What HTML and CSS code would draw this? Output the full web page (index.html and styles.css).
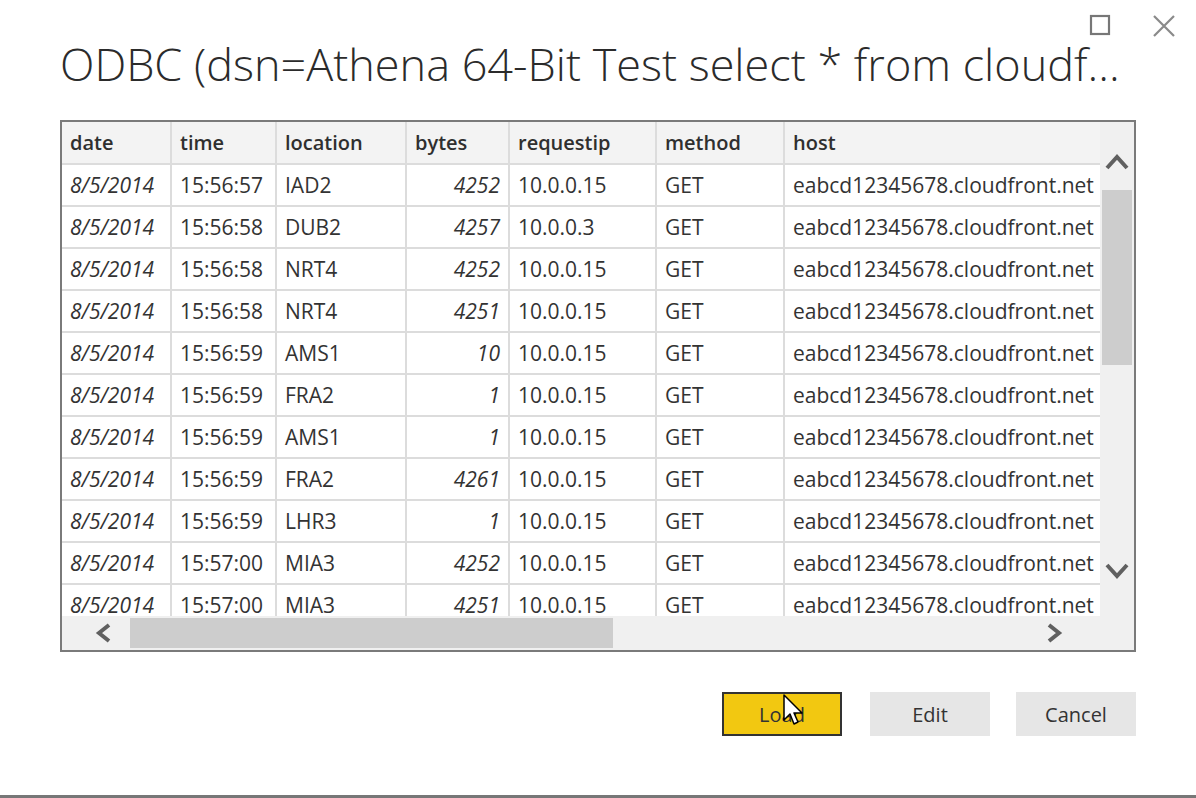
FILE: index.html
```html
<!DOCTYPE html>
<html lang="en">
<head>
<meta charset="utf-8">
<title>ODBC preview</title>
<link rel="stylesheet" href="styles.css">
</head>
<body>
<div class="dialog">
  <div class="titlebar">
    <svg class="win-icon" width="22" height="22" viewBox="0 0 22 22"><rect x="2" y="2" width="18" height="18" fill="none" stroke="#777" stroke-width="2.2"/></svg>
    <svg class="win-icon close" width="24" height="24" viewBox="0 0 24 24"><path d="M2 2 L22 22 M22 2 L2 22" stroke="#8a8a8a" stroke-width="2.2"/></svg>
  </div>
  <h1 class="title">ODBC (dsn=Athena 64-Bit Test select * from cloudf...</h1>
  <div class="frame">
    <div class="viewport">
      <div class="grid">
        <div class="hd">date</div><div class="hd">time</div><div class="hd">location</div><div class="hd">bytes</div><div class="hd">requestip</div><div class="hd">method</div><div class="hd">host</div>

        <div class="c i">8/5/2014</div><div class="c">15:56:57</div><div class="c">IAD2</div><div class="c i r">4252</div><div class="c">10.0.0.15</div><div class="c">GET</div><div class="c">eabcd12345678.cloudfront.net</div>
        <div class="c i">8/5/2014</div><div class="c">15:56:58</div><div class="c">DUB2</div><div class="c i r">4257</div><div class="c">10.0.0.3</div><div class="c">GET</div><div class="c">eabcd12345678.cloudfront.net</div>
        <div class="c i">8/5/2014</div><div class="c">15:56:58</div><div class="c">NRT4</div><div class="c i r">4252</div><div class="c">10.0.0.15</div><div class="c">GET</div><div class="c">eabcd12345678.cloudfront.net</div>
        <div class="c i">8/5/2014</div><div class="c">15:56:58</div><div class="c">NRT4</div><div class="c i r">4251</div><div class="c">10.0.0.15</div><div class="c">GET</div><div class="c">eabcd12345678.cloudfront.net</div>
        <div class="c i">8/5/2014</div><div class="c">15:56:59</div><div class="c">AMS1</div><div class="c i r">10</div><div class="c">10.0.0.15</div><div class="c">GET</div><div class="c">eabcd12345678.cloudfront.net</div>
        <div class="c i">8/5/2014</div><div class="c">15:56:59</div><div class="c">FRA2</div><div class="c i r">1</div><div class="c">10.0.0.15</div><div class="c">GET</div><div class="c">eabcd12345678.cloudfront.net</div>
        <div class="c i">8/5/2014</div><div class="c">15:56:59</div><div class="c">AMS1</div><div class="c i r">1</div><div class="c">10.0.0.15</div><div class="c">GET</div><div class="c">eabcd12345678.cloudfront.net</div>
        <div class="c i">8/5/2014</div><div class="c">15:56:59</div><div class="c">FRA2</div><div class="c i r">4261</div><div class="c">10.0.0.15</div><div class="c">GET</div><div class="c">eabcd12345678.cloudfront.net</div>
        <div class="c i">8/5/2014</div><div class="c">15:56:59</div><div class="c">LHR3</div><div class="c i r">1</div><div class="c">10.0.0.15</div><div class="c">GET</div><div class="c">eabcd12345678.cloudfront.net</div>
        <div class="c i">8/5/2014</div><div class="c">15:57:00</div><div class="c">MIA3</div><div class="c i r">4252</div><div class="c">10.0.0.15</div><div class="c">GET</div><div class="c">eabcd12345678.cloudfront.net</div>
        <div class="c i">8/5/2014</div><div class="c">15:57:00</div><div class="c">MIA3</div><div class="c i r">4251</div><div class="c">10.0.0.15</div><div class="c">GET</div><div class="c">eabcd12345678.cloudfront.net</div>
      </div>
    </div>
    <div class="vscroll">
      <div class="sbtn up"><svg width="24" height="20" viewBox="0 0 24 20"><polyline points="2,17 12,6 22,17" fill="none" stroke="#606060" stroke-width="4"/></svg></div>
      <div class="vtrack"><div class="vthumb"></div></div>
      <div class="sbtn down"><svg width="24" height="20" viewBox="0 0 24 20"><polyline points="2,3 12,14 22,3" fill="none" stroke="#606060" stroke-width="4"/></svg></div>
    </div>
    <div class="hscroll">
      <div class="sbtn h left"><svg width="20" height="22" viewBox="0 0 20 22"><polyline points="16,3 6,11 16,19" fill="none" stroke="#606060" stroke-width="4"/></svg></div>
      <div class="htrack"><div class="hthumb"></div></div>
      <div class="sbtn h right"><svg width="20" height="22" viewBox="0 0 20 22"><polyline points="4,3 14,11 4,19" fill="none" stroke="#606060" stroke-width="4"/></svg></div>
    </div>
    <div class="corner"></div>
  </div>
  <div class="actions">
    <button class="btn primary">Load
      <svg class="cursor" width="24" height="36" viewBox="0 0 24 36"><path d="M1 1 L1 26 L7 20 L11 30 L15 28 L11 19 L19 19 Z" fill="#fff" stroke="#000" stroke-width="1.5" stroke-linejoin="round"/></svg>
    </button>
    <button class="btn">Edit</button>
    <button class="btn">Cancel</button>
  </div>
  <div class="bottom-line"></div>
</div>
</body>
</html>
```

FILE: styles.css
```css
html, body {
  margin: 0;
  padding: 0;
  background: #ffffff;
}

.dialog {
  width: 1196px;
  height: 798px;
  display: flex;
  flex-direction: column;
  font-family: "Open Sans", "Liberation Sans", sans-serif;
  color: #333333;
  box-sizing: border-box;
}

.titlebar {
  height: 40px;
  display: flex;
  justify-content: flex-end;
  align-items: flex-start;
  padding: 14px 20px 0 0;
  gap: 41px;
  box-sizing: border-box;
}

.title {
  margin: -6px 0 0 60px;
  font-weight: 300;
  font-size: 45px;
  line-height: 60px;
  color: #2b2b2b;
  white-space: nowrap;
}

.frame {
  margin: 26px 0 0 60px;
  width: 1076px;
  height: 532px;
  border: 2px solid #7a7a7a;
  box-sizing: border-box;
  display: grid;
  grid-template-columns: 1038px 34px;
  grid-template-rows: 494px 34px;
  background: #f0f0f0;
}

.viewport {
  overflow: hidden;
  background: #dcdcdc;
}

.grid {
  display: grid;
  grid-template-columns: 108px 103px 128px 101px 145px 126px 315px;
  grid-auto-rows: 40px;
  grid-template-rows: 41px;
  gap: 2px;
  font-size: 21px;
}

.hd {
  background: #f3f3f3;
  font-weight: 600;
  font-size: 20px;
  padding: 0 8px;
  display: flex;
  align-items: center;
  color: #2f2f2f;
}

.c {
  background: #ffffff;
  padding: 0 8px;
  display: flex;
  align-items: center;
  white-space: nowrap;
  color: #333333;
}

.c.i { font-style: italic; }
.c.r { justify-content: flex-end; }

.vscroll {
  display: flex;
  flex-direction: column;
  background: #f0f0f0;
}

.sbtn {
  height: 66px;
  display: flex;
  justify-content: center;
  align-items: flex-start;
  flex: none;
  box-sizing: border-box;
}

.sbtn.up { padding-top: 29px; }
.sbtn.down { padding-top: 12px; }

.sbtn.h {
  height: auto;
  width: 66px;
  align-items: center;
  justify-content: flex-start;
}

.sbtn.left { padding-left: 31px; }
.sbtn.right { padding-left: 11px; }

.vtrack {
  flex: 1;
  padding: 2px;
}

.vthumb {
  width: 30px;
  height: 175px;
  background: #cdcdcd;
}

.hscroll {
  display: flex;
  background: #f0f0f0;
}

.htrack {
  flex: 1;
  padding: 2px;
}

.hthumb {
  width: 483px;
  height: 30px;
  background: #cdcdcd;
}

.corner { background: #f0f0f0; }

.actions {
  display: flex;
  justify-content: flex-end;
  gap: 28px;
  margin: 40px 60px 0 0;
}

.actions .btn + .btn + .btn { margin-left: -2px; }

.btn {
  position: relative;
  width: 120px;
  height: 44px;
  border: 0;
  background: #e6e6e6;
  font-family: "Open Sans", "Liberation Sans", sans-serif;
  font-size: 20px;
  color: #333333;
  padding: 0;
}

.btn.primary {
  background: #f2c811;
  border: 2px solid #333333;
}

.cursor {
  position: absolute;
  left: 59px;
  top: 0px;
}

.bottom-line {
  margin-top: auto;
  height: 3px;
  background: #777777;
}
```
